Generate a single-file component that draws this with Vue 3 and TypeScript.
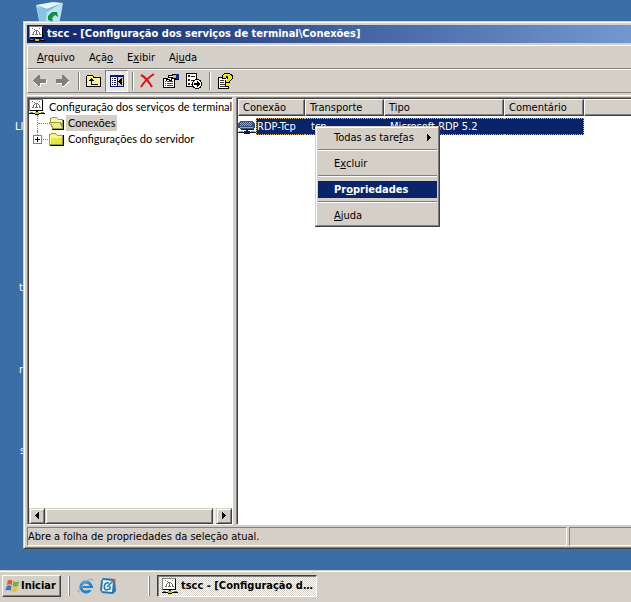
<script setup lang="ts">
import { ref } from 'vue'

interface Label {
  before: string
  key: string
  after: string
}
interface MenuEntry extends Label {
  submenu?: boolean
  primary?: boolean
}
interface Connection {
  name: string
  transport: string
  type: string
  comment: string
}

const title = 'tscc - [Configuração dos serviços de terminal\\Conexões]'
const menus: Label[] = [
  { before: '', key: 'A', after: 'rquivo' },
  { before: 'Açã', key: 'o', after: '' },
  { before: 'E', key: 'x', after: 'ibir' },
  { before: 'Aj', key: 'u', after: 'da' },
]
const contextMenu: MenuEntry[] = [
  { before: 'Todas as tare', key: 'f', after: 'as', submenu: true },
  { before: 'E', key: 'x', after: 'cluir' },
  { before: 'Pr', key: 'o', after: 'priedades', primary: true },
  { before: '', key: 'A', after: 'juda' },
]
const columns = ['Conexão', 'Transporte', 'Tipo', 'Comentário']
const connections: Connection[] = [
  { name: 'RDP-Tcp', transport: 'tcp', type: 'Microsoft RDP 5.2', comment: '' },
]
const treeVisible = ref(true)
</script>

<template>
  <div class="screen">
    <svg class="defs" aria-hidden="true">
      <symbol id="console" viewBox="0 0 16 16">
        <path fill="#808080" d="M0 0h14v1H0zM0 1h1v11H0z" />
        <path fill="#fff" d="M1 1h12v10H1z" />
        <path fill="#000" d="M13 1h1v11H1v-1h12zM7 12h2v2H7zM0 14h16v1H0z" />
        <path fill="#777" d="M3 2h1v1H3zM5 3h1v1H5zM10 2h1v1h-1zM6 4h3v1H6zM5 5h1v1H5zM9 5h1v1H9zM4 6h1v2H4zM7 5h1v3H7zM10 6h1v2h-1zM3 8h2v1H3zM6 8h3v1H6zM10 8h2v1h-2z" />
        <path fill="#c8c000" d="M6 13h4v2H6z" />
        <path fill="#4f8585" d="M1 13h3v1H1zM12 13h3v1h-3z" />
        <path fill="#000" d="M6 15h4v1H6z" />
      </symbol>
      <symbol id="folder" viewBox="0 0 16 16">
        <path fill="#9a9a48" d="M2 2h5v1h1v1h6v10H0V3h2z" />
        <path fill="#f7f58a" d="M2 3h5v1h1v1h5v1H1V4h1z" />
        <path fill="#e4e23c" d="M1 6h12v7H1z" />
        <path fill="#fffca0" d="M1 6h11v1H2v6H1zM4 8h1v1H4zM7 8h1v1H7zM5 10h1v1H5zM9 10h1v1H9z" />
        <path fill="#000" d="M14 4h1v11H1v-1h13z" />
      </symbol>
      <symbol id="folder-open" viewBox="0 0 16 16">
        <path fill="#9a9a48" d="M3 2h5v1h1v1h5v4h1v6H4v-1H3v-2H2V9H0V7h1V3h2z" />
        <path fill="#faf7b0" d="M3 3h5v1h1v1h4v3H2V4h1z" />
        <path fill="#9a9a48" d="M0 7h12v1h1v2h1v4H3v-2H2v-2H1V8H0z" />
        <path fill="#f0ed80" d="M1 8h10v2h1v2h1v1H4v-2H3V9H1z" />
        <path fill="#000" d="M14 5h1v10H3v-1h11z" />
      </symbol>
    </svg>

    <main class="desktop">
      <svg class="recycle" viewBox="0 0 28 32" aria-label="Lixeira">
        <path fill="#b9e3f2" d="M0 5 11 9 27 3 22 31H5z" />
        <path fill="#e4f8fd" d="M0 5 17 2 27 3 11 9z" />
        <path fill="#75bbd9" d="m2 6 9 3 13-5-13 8z" />
        <path fill="#87c5e0" d="m11 10-2 21H5L1 7z" />
        <path fill="#158b43" d="m12 16 4-4h5l1 5-3-2-3 3 1 3-5-1zM14 20l-2 4 7-1z" />
      </svg>
      <span class="shortcut shortcut-a">LICENÇAS</span>
      <span class="shortcut shortcut-b">tscc</span>
      <span class="shortcut shortcut-c">rede</span>
      <span class="shortcut shortcut-d">setup</span>

      <section class="window">
        <header class="titlebar">
          <svg class="icon crisp"><use href="#console" /></svg>
          <h1>{{ title }}</h1>
        </header>

        <nav class="menubar">
          <button v-for="m in menus" :key="m.before + m.key" type="button">{{ m.before }}<u>{{ m.key }}</u>{{ m.after }}</button>
        </nav>

        <div class="toolbar">
          <button type="button" aria-label="Voltar">
            <svg class="icon crisp" viewBox="0 0 16 16">
              <path fill="#fff" d="M3 9h4v4h1v-3h6V7h1v4H9v3H6v-1H5v-1H4v-1H3z" />
              <path fill="#808080" d="M6 2h2v4h6v4H8v3H6v-1H5v-1H4v-1H3V9H2V8H1V7h1V6h1V5h1V4h1V3h1z" />
            </svg>
          </button>
          <button type="button" aria-label="Avançar">
            <svg class="icon crisp" viewBox="0 0 16 16">
              <path fill="#fff" d="M2 10h6v3h2v1H7v-3H2zM14 8h1v1h-1v1h-1v1h-1v1h-1v1h-1v-1h1v-1h1V9h1z" />
              <path fill="#808080" d="M7 2h2v1h1v1h1v1h1v1h1v1h1v1h-1v1h-1v1h-1v1h-1v1H9v1H7v-3H1V6h6z" />
            </svg>
          </button>
          <i class="separator"></i>
          <button type="button" aria-label="Um nível acima">
            <svg class="icon crisp" viewBox="0 0 16 16">
              <path fill="#000" d="M1 2h6v1h1v1h7v10H0V3h1z" />
              <path fill="#fff58c" d="M1 3h6v2h7v8H1z" />
              <path fill="#000" d="M5 5h1v1h1v1h1v1H6v3h6v1H5V8H3V7h1V6h1z" />
            </svg>
          </button>
          <button
            type="button"
            :class="{ pressed: treeVisible }"
            :aria-pressed="treeVisible"
            aria-label="Mostrar árvore de console"
            @click="treeVisible = !treeVisible"
          >
            <svg class="icon crisp" viewBox="0 0 16 16">
              <path fill="#0a1a66" d="M1 2h14v12H1z" />
              <path fill="#fff" d="M2 4h6v9H2z" />
              <path fill="#d4d0c8" d="M9 4h5v9H9z" />
              <path fill="#0a1a66" d="M3 5h1v1H3zM5 5h2v1H5zM3 7h1v1H3zM5 7h2v1H5zM3 9h1v1H3zM5 9h2v1H5zM3 11h1v1H3zM5 11h2v1H5z" />
              <path fill="#000" d="M12 5h1v7h-1v-1h-1v-1h-1V9H9V8h1V7h1V6h1z" />
            </svg>
          </button>
          <i class="separator"></i>
          <button type="button" aria-label="Excluir">
            <svg class="icon" viewBox="0 0 16 16">
              <path fill="none" stroke="#d81414" stroke-width="2" d="M1 2c4 2 8 7 11 12" />
              <path fill="none" stroke="#d81414" stroke-width="2" d="M14 1C9 4 4 9 1 14" />
            </svg>
          </button>
          <button type="button" aria-label="Propriedades">
            <svg class="icon crisp" viewBox="0 0 16 16">
              <path fill="#000" d="M0 5h12v10H0z" />
              <path fill="#fff" d="M1 6h10v8H1z" />
              <path fill="#444" d="M2 8h1v1H2zM4 8h6v1H4zM2 10h1v1H2zM4 10h6v1H4zM2 12h1v1H2zM4 12h6v1H4z" />
              <path fill="#000" d="M5 2h4V1h4v1h3v5h-4V6H9v2H6V7H4V5h1zM3 5h1v3H3z" />
              <path fill="#fff" d="M6 3h3v1H6zM5 5h3v1H5zM7 6h1v1H7zM9 3h1v1H9z" />
              <path fill="#17267c" d="M13 1h3v5h-3z" />
              <path fill="#b9b9b9" d="M10 2h3v3h-3z" />
            </svg>
          </button>
          <button type="button" aria-label="Exportar lista">
            <svg class="icon crisp" viewBox="0 0 16 16">
              <path fill="#000" d="M0 0h11v14H0z" />
              <path fill="#fff" d="M1 1h9v12H1z" />
              <path fill="#222" d="M2 2h2v2H2zM5 3h4v1H5zM2 6h2v2H2zM5 7h4v1H5zM2 10h2v2H2zM5 11h4v1H5z" />
              <path fill="#000" d="M9 6h4v1h2v2h1v4h-1v2h-2v1H9v-1H7v-2H6V9h1V7h2z" />
              <path fill="#fff" d="M9 7h4v1h1v1h1v4h-1v1h-1v1H9v-1H8v-1H7V9h1V8h1z" />
              <path fill="#000" d="M8 10h3V8h1v1h1v1h1v2h-1v1h-1v1h-1v-2H8z" />
            </svg>
          </button>
          <i class="separator"></i>
          <button type="button" aria-label="Ajuda">
            <svg class="icon crisp" viewBox="0 0 16 16">
              <path fill="#000" d="M1 4h11v12H1z" />
              <path fill="#fff" d="M2 5h9v10H2z" />
              <path fill="#333" d="M3 7h4v1H3zM3 9h4v1H3zM3 11h5v1H3zM3 13h6v1H3z" />
              <path fill="#000" d="M7 0h6v1h2v1h1v4h-1v1h-1v1h-1v2h-1v4H8V7h2V5H9v1H5V2h1V1h1z" />
              <path fill="#f2e500" d="M7 1h6v1h1v1h1v3h-1v1h-1v1h-1v1H9V7h1V6h1V3H9v2H6V2h1zM9 10h3v3H9z" />
            </svg>
          </button>
        </div>

        <div class="content">
          <aside v-show="treeVisible" class="tree-pane">
            <ul class="tree">
              <li class="root">
                <svg class="icon crisp"><use href="#console" /></svg>
                <span>Configuração dos serviços de terminal</span>
              </li>
              <li class="node">
                <i class="branch"></i>
                <svg class="icon crisp"><use href="#folder-open" /></svg>
                <span class="current">Conexões</span>
              </li>
              <li class="node last">
                <i class="branch"></i>
                <button class="expander" type="button" aria-label="Expandir">
                  <svg class="crisp" viewBox="0 0 9 9"><path d="M2 4h5v1H2zM4 2h1v5H4z" /></svg>
                </button>
                <svg class="icon crisp"><use href="#folder" /></svg>
                <span>Configurações do servidor</span>
              </li>
            </ul>
            <div class="scrollbar">
              <button class="raised" type="button" aria-label="Rolar para a esquerda">
                <svg class="crisp" viewBox="0 0 8 8"><path d="M5 0h1v7H5V6H4V5H3V4H2V3h1V2h1V1h1z" /></svg>
              </button>
              <div class="thumb raised"></div>
              <button class="raised" type="button" aria-label="Rolar para a direita">
                <svg class="crisp" viewBox="0 0 8 8"><path d="M2 0h1v1h1v1h1v1h1v1H5v1H4v1H3v1H2z" /></svg>
              </button>
            </div>
          </aside>

          <div class="list-pane">
            <table>
              <colgroup>
                <col class="c-name" /><col class="c-transport" /><col class="c-type" /><col class="c-comment" /><col />
              </colgroup>
              <thead>
                <tr>
                  <th v-for="c in columns" :key="c" scope="col">{{ c }}</th>
                  <td class="filler"></td>
                </tr>
              </thead>
              <tbody>
                <tr v-for="row in connections" :key="row.name">
                  <td class="name">
                    <div>
                      <svg class="link-icon crisp" viewBox="0 0 18 16">
                        <path fill="#34507a" d="M2 2h13v1h1v1h1v5h-1v1H2V9H0V4h1V3h1z" />
                        <path fill="#8fa9c4" d="M3 3h1v1H3zM5 3h1v1H5zM7 3h1v1H7zM9 3h1v1H9zM11 3h1v1h-1zM13 3h1v1h-1zM2 4h1v1H2zM4 4h1v1H4zM6 4h1v1H6zM8 4h1v1H8zM10 4h1v1h-1zM12 4h1v1h-1zM3 5h1v1H3zM5 5h1v1H5zM7 5h1v1H7zM9 5h1v1H9zM11 5h1v1h-1zM13 5h1v1h-1zM2 6h1v1H2zM4 6h1v1H4zM6 6h1v1H6zM8 6h1v1H8zM10 6h1v1h-1zM12 6h1v1h-1zM2 8h13v1H2z" />
                        <path fill="#111c33" d="M3 10h13v1H3zM8 11h2v2H8zM0 13h18v1H0zM6 12h6v3H6z" />
                        <path fill="#7fa0a0" d="M1 12h4v1H1zM13 12h4v1h-4z" />
                      </svg>
                      <span>{{ row.name }}</span>
                    </div>
                  </td>
                  <td>{{ row.transport }}</td>
                  <td>{{ row.type }}</td>
                  <td class="end">{{ row.comment }}</td>
                  <td class="blank"></td>
                </tr>
              </tbody>
            </table>

            <div class="context-menu" role="menu">
              <template v-for="(item, i) in contextMenu" :key="i">
                <hr v-if="i > 0" />
                <button type="button" role="menuitem" :class="{ primary: item.primary }">
                  <span>{{ item.before }}<u>{{ item.key }}</u>{{ item.after }}</span>
                  <svg v-if="item.submenu" class="crisp" viewBox="0 0 8 8"><path d="M2 0h1v1h1v1h1v1h1v1H5v1H4v1H3v1H2z" /></svg>
                </button>
              </template>
            </div>
          </div>
        </div>

        <footer class="statusbar">
          <p>Abre a folha de propriedades da seleção atual.</p>
          <p class="side"></p>
        </footer>
      </section>
    </main>

    <footer class="taskbar">
      <button class="start" type="button">
        <svg viewBox="0 0 16 16">
          <path fill="#e5562b" d="M3 2c2-1 3-1 5 0L7 7C5 6 4 6 2 7z" />
          <path fill="#6fb43c" d="M9 3c2 1 4 1 6 0l-1 5c-2 1-4 1-6 0z" />
          <path fill="#3c76d2" d="M2 8c2-1 3-1 5 0l-1 5c-2-1-4-1-6 0z" />
          <path fill="#f5be2e" d="M8 9c2 1 3 1 6 0l-2 5c-2 1-3 1-5 0z" />
        </svg>
        Iniciar
      </button>
      <i class="grip"></i>
      <div class="quick">
        <button type="button" aria-label="Internet Explorer">
          <svg class="icon" viewBox="0 0 16 16">
            <circle cx="8" cy="9" r="5" fill="none" stroke="#2581cb" stroke-width="3" />
            <path fill="#d4d0c8" d="M8 10h7v2H8z" />
            <path fill="#2581cb" d="M5 8h10v2H5z" />
            <path fill="none" stroke="#64b5e8" stroke-width="1" d="M2 14C-1 15 1 9 7 4c4-3 9-4 8-1M4 6c2-2 5-3 7-1" />
          </svg>
        </button>
        <button type="button" aria-label="Mostrar área de trabalho">
          <svg class="icon" viewBox="0 0 16 16">
            <path fill="#2876ac" d="m3 0 12 1 1 12-3 3-11-1-2-3L1 3z" />
            <path fill="#e9f6fc" d="m3 2 10 1-1 11-10-1z" />
            <path fill="none" stroke="#2876ac" stroke-width="1.5" d="M9 5C4 4 3 10 6 12l4-1V8M7 9l6-6" />
            <path fill="#d55b35" d="m12 3 2-2 2 1-3 3z" />
          </svg>
        </button>
      </div>
      <i class="grip"></i>
      <button class="task" type="button" aria-pressed="true">
        <svg class="icon crisp"><use href="#console" /></svg>
        <span>{{ title }}</span>
      </button>
    </footer>
  </div>
</template>

<style>
body {
  margin: 0;
  overflow: hidden;
}
</style>

<style scoped>
* {
  box-sizing: border-box;
}
.screen {
  display: flex;
  flex-direction: column;
  min-height: 100vh;
  background: #3a6ea5;
  color: #000;
  font: 11px/16px Tahoma, "DejaVu Sans Condensed", "DejaVu Sans", sans-serif;
  overflow: hidden;
  cursor: default;
}
.defs {
  position: absolute;
  width: 0;
  height: 0;
}
button {
  display: flex;
  align-items: center;
  margin: 0;
  padding: 0;
  border: 0;
  background: none;
  color: inherit;
  font: inherit;
  white-space: nowrap;
}
svg {
  display: block;
  flex: none;
}
.icon {
  width: 16px;
  height: 16px;
}
.crisp {
  shape-rendering: crispEdges;
}
u {
  text-underline-offset: 1px;
}
.raised {
  background: #d4d0c8;
  border: 1px solid;
  border-color: #d4d0c8 #404040 #404040 #d4d0c8;
  box-shadow: inset 1px 1px #fff, inset -1px -1px #808080;
}

/* Desktop */
.desktop {
  position: relative;
  flex: 1;
  display: flex;
  padding: 21px 0 21px 23px;
}
.recycle {
  position: absolute;
  left: 36px;
  top: 0;
  width: 28px;
  height: 32px;
}
.shortcut {
  position: absolute;
  color: #fff;
}
.shortcut-a { left: 15px; top: 119px; }
.shortcut-b { left: 19px; top: 280px; }
.shortcut-c { left: 19px; top: 362px; }
.shortcut-d { left: 20px; top: 443px; }

/* Console window */
.window {
  position: relative;
  flex: 1;
  min-width: 0;
  display: flex;
  flex-direction: column;
  padding: 3px 0 2px 3px;
  background: #d4d0c8;
  border-top: 1px solid #d4d0c8;
  border-left: 1px solid #d4d0c8;
  border-bottom: 1px solid #404040;
  box-shadow: inset 1px 1px #fff, inset 0 -1px #808080;
}
.titlebar {
  display: flex;
  align-items: center;
  gap: 2px;
  height: 18px;
  padding-left: 2px;
  background: linear-gradient(90deg, #0a246a, #7398d0);
  color: #fff;
}
.titlebar h1 {
  margin: 0;
  font-size: 11px;
  line-height: 16px;
  white-space: nowrap;
}
.menubar {
  display: flex;
  height: 24px;
  margin-top: 2px;
  padding: 2px 0 0 2px;
  border-top: 1px solid #fff;
  border-left: 1px solid #fff;
  border-bottom: 1px solid #808080;
}
.menubar button {
  padding: 0 7px;
}
.toolbar {
  display: flex;
  align-items: center;
  height: 24px;
  border-top: 1px solid #fff;
  border-left: 1px solid #fff;
  border-bottom: 1px solid #808080;
}
.toolbar button {
  justify-content: center;
  width: 23px;
  height: 22px;
}
.toolbar .pressed {
  border: 1px solid;
  border-color: #808080 #fff #fff #808080;
  background: #ebe9e4;
}
.separator {
  width: 8px;
  height: 18px;
  border-left: 1px solid #808080;
  box-shadow: inset 1px 0 #fff;
  margin-left: 4px;
  margin-right: -4px;
}
.content {
  flex: 1;
  display: flex;
  gap: 3px;
  margin-top: 2px;
  border-top: 1px solid #fff;
  padding-top: 1px;
}
.tree-pane,
.list-pane {
  border: 1px solid #808080;
  border-right-color: #fff;
  border-bottom-color: #fff;
  box-shadow: inset 1px 1px #404040;
  background: #fff;
}
.tree-pane {
  display: flex;
  flex-direction: column;
  justify-content: space-between;
  width: 206px;
  padding: 1px 0 0 1px;
}
.tree {
  margin: 0;
  padding: 0;
  list-style: none;
  font-family: Tahoma, Lato, sans-serif;
}
.tree li {
  position: relative;
  display: flex;
  align-items: center;
  height: 16px;
  white-space: nowrap;
}
.root {
  gap: 4px;
}
.node {
  gap: 1px;
  padding-left: 20px;
}
.node span {
  padding: 0 2px;
}
.current {
  background: #d4d0c8;
}
.branch {
  position: absolute;
  left: 8px;
  top: 0;
  width: 11px;
  height: 16px;
  border-left: 1px dotted #808080;
}
.branch::after {
  content: "";
  display: block;
  height: 8px;
  border-bottom: 1px dotted #808080;
}
.last .branch {
  height: 8px;
}
.expander {
  position: absolute;
  left: 4px;
  top: 4px;
  width: 9px;
  height: 9px;
  justify-content: center;
  border: 1px solid #808080;
  background: #fff;
}
.expander svg {
  width: 9px;
  height: 9px;
}
.scrollbar {
  display: flex;
  height: 16px;
  background: #ebe9e4;
}
.scrollbar button {
  justify-content: center;
  width: 16px;
}
.scrollbar svg,
.context-menu svg {
  width: 8px;
  height: 8px;
}
.thumb {
  flex: 1;
  margin-right: 3px;
}
.list-pane {
  position: relative;
  flex: 1;
  min-width: 0;
  padding: 1px 0 0 1px;
  border-right: 0;
}
table {
  width: 100%;
  table-layout: fixed;
  border-collapse: separate;
  border-spacing: 0;
}
.c-name { width: 67px; }
.c-transport { width: 79px; }
.c-type { width: 120px; }
.c-comment { width: 80px; }
th,
.filler {
  height: 17px;
  padding: 0 0 0 4px;
  background: #d4d0c8;
  border: 1px solid;
  border-color: #fff #404040 #404040 #fff;
  box-shadow: inset -1px -1px #808080;
  font-weight: normal;
  line-height: 15px;
  text-align: left;
  white-space: nowrap;
}
.filler {
  border-right: 0;
  box-shadow: inset 0 -1px #808080;
}
tbody td {
  height: 17px;
  padding: 0 0 0 6px;
  border-top: 1px dotted #d8b878;
  border-bottom: 1px dotted #d8b878;
  background: #0a246a;
  color: #fff;
  line-height: 15px;
  white-space: nowrap;
}
tbody::before {
  content: "";
  display: block;
  height: 2px;
}
tbody .name {
  padding: 0;
  border: 0;
  background: none;
}
.name div {
  display: flex;
  align-items: center;
}
.name span {
  flex: 1;
  height: 17px;
  border: 1px dotted #d8b878;
  border-right: 0;
  background: #0a246a;
}
.link-icon {
  width: 18px;
  height: 16px;
}
tbody .end {
  border-right: 1px dotted #d8b878;
}
tbody .blank {
  border: 0;
  background: none;
}
.context-menu {
  position: absolute;
  left: 78px;
  top: 28px;
  width: 125px;
  padding: 3px;
  background: #d4d0c8;
  box-shadow: inset -1px -1px #404040, inset 1px 1px #d4d0c8, inset -2px -2px #808080, inset 2px 2px #fff;
}
.context-menu button {
  justify-content: space-between;
  width: 100%;
  height: 17px;
  padding: 0 4px 0 16px;
}
.context-menu .primary {
  background: #0a246a;
  color: #fff;
  font-weight: bold;
}
.context-menu hr {
  height: 2px;
  margin: 3px 0 4px;
  border: 0;
  border-top: 1px solid #808080;
  border-bottom: 1px solid #fff;
}
.statusbar {
  display: flex;
  gap: 2px;
  margin-top: 2px;
}
.statusbar p {
  flex: 1;
  height: 19px;
  margin: 0;
  border: 1px solid;
  border-color: #808080 #fff #fff #808080;
  line-height: 18px;
}
.statusbar .side {
  flex: 0 0 62px;
  border-right: 0;
}

/* Taskbar */
.taskbar {
  display: flex;
  align-items: center;
  height: 32px;
  padding: 0 2px 4px;
  background: #d4d0c8;
  box-shadow: inset 0 1px #d4d0c8, inset 0 2px #fff;
}
.start,
.task {
  height: 22px;
  margin-top: 4px;
  font-weight: bold;
}
.start {
  gap: 1px;
  width: 59px;
  padding-left: 2px;
  border: 1px solid;
  border-color: #fff #404040 #404040 #fff;
  box-shadow: inset -1px -1px #808080;
}
.start svg {
  width: 15px;
  height: 16px;
}
.grip {
  width: 2px;
  height: 20px;
  margin: 4px 7px 0;
  border-left: 1px solid #fff;
  border-right: 1px solid #808080;
}
.quick {
  display: flex;
  gap: 6px;
  width: 64px;
  padding: 4px 0 0 1px;
}
.task {
  gap: 3px;
  width: 160px;
  padding: 0 2px 0 4px;
  border: 1px solid;
  border-color: #404040 #fff #fff #404040;
  box-shadow: inset 1px 1px #808080;
  background: repeating-conic-gradient(#fff 0 25%, #d4d0c8 0 50%) 0 0 / 2px 2px;
}
.task span {
  overflow: hidden;
  text-overflow: ellipsis;
}
</style>
